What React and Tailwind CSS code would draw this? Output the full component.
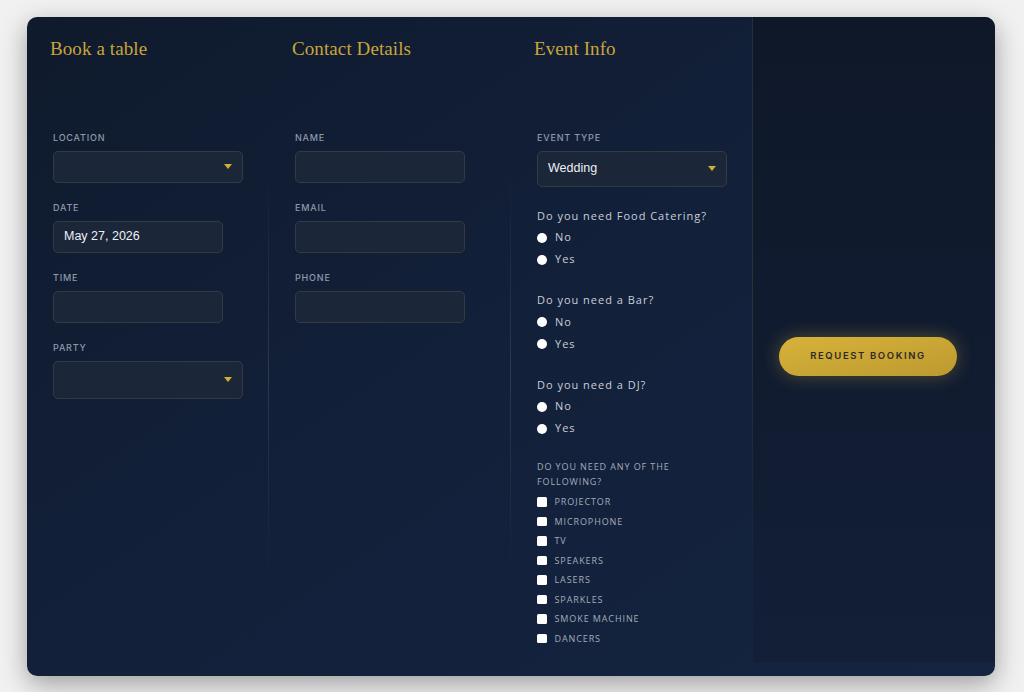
import React from "react";

const serif = { fontFamily: '"Liberation Serif", "DejaVu Serif", serif' };

function Arrow() {
  return (
    <svg width="8" height="5" viewBox="0 0 8 5" className="shrink-0">
      <polygon points="0,0 8,0 4,5" fill="#d4ad35" />
    </svg>
  );
}

function Label({ children }) {
  return (
    <div className="font-['Inter',sans-serif] text-[9px] leading-[12px] font-medium tracking-[0.09em] text-[#8f99ab] uppercase mb-[7px]">
      {children}
    </div>
  );
}

function TextInput({ value }) {
  return (
    <div className="w-[170px] h-[32px] rounded-[5px] border border-[#343a43] bg-[#1b2639] flex items-center px-[10px] font-['Liberation_Sans',Arial,sans-serif] text-[12.5px] text-[#eef1f5]">
      {value}
    </div>
  );
}

function Select({ value, h }) {
  return (
    <div
      className={`w-[190px] ${h} rounded-[5px] border border-[#343a43] bg-[#1b2639] flex items-center justify-between pl-[10px] pr-[10px] font-['Liberation_Sans',Arial,sans-serif] text-[12.5px] text-[#eef1f5]`}
    >
      <span>{value}</span>
      <Arrow />
    </div>
  );
}

function Field({ label, children, last }) {
  return (
    <div className={last ? "" : "mb-[19px]"}>
      <Label>{label}</Label>
      {children}
    </div>
  );
}

function Heading({ children }) {
  return (
    <h2
      style={serif}
      className="text-[19px] leading-[24px] tracking-[0.005em] text-[#c9a53b] -ml-[3px]"
    >
      {children}
    </h2>
  );
}

function Radio({ label }) {
  return (
    <div className="h-[22px] flex items-center gap-[8px]">
      <span className="w-[10px] h-[10px] rounded-full bg-white shrink-0" />
      <span className="font-['Open_Sans',sans-serif] text-[11px] tracking-[0.09em] text-[#c9cfd9]">
        {label}
      </span>
    </div>
  );
}

function Question({ q, first }) {
  return (
    <div className={first ? "mt-[21px]" : "mt-[21.5px]"}>
      <div className="font-['Open_Sans',sans-serif] text-[11px] leading-[16px] tracking-[0.09em] text-[#c9cfd9] mb-[3px]">
        {q}
      </div>
      <Radio label="No" />
      <Radio label="Yes" />
    </div>
  );
}

function Check({ label }) {
  return (
    <div className="h-[19.5px] flex items-center gap-[8px]">
      <span className="w-[9.5px] h-[9.5px] rounded-[1.5px] bg-white shrink-0" />
      <span className="font-['Open_Sans',sans-serif] text-[9px] tracking-[0.1em] text-[#a3abba] uppercase">
        {label}
      </span>
    </div>
  );
}

function Divider() {
  return (
    <div className="w-px shrink-0 mt-[150px] mb-[95px] bg-linear-to-b from-transparent via-[#2e394a] to-transparent" />
  );
}

export default function App() {
  return (
    <div className="w-[1024px] h-[692px] bg-[#f1f1f1] pt-[17px] pl-[27px] overflow-hidden">
      <div className="w-[968px] h-[659px] rounded-[10px] bg-linear-to-br from-[#0f1a2c] via-[#12203a] to-[#15243f] shadow-[0_8px_26px_rgba(0,0,0,0.35)] flex overflow-hidden">
        {/* Column 1 */}
        <div className="w-[241px] shrink-0 pl-[26px] pr-[24px] pt-[20px]">
          <Heading>Book a table</Heading>
          <div className="mt-[70.5px]">
            <Field label="Location">
              <Select value="" h="h-[32px]" />
            </Field>
            <Field label="Date">
              <TextInput value="May 27, 2026" />
            </Field>
            <Field label="Time">
              <TextInput value="" />
            </Field>
            <Field label="Party" last>
              <Select value="" h="h-[38px]" />
            </Field>
          </div>
        </div>
        <Divider />
        {/* Column 2 */}
        <div className="w-[241px] shrink-0 pl-[26px] pr-[24px] pt-[20px]">
          <Heading>Contact Details</Heading>
          <div className="mt-[70.5px]">
            <Field label="Name">
              <TextInput value="" />
            </Field>
            <Field label="Email">
              <TextInput value="" />
            </Field>
            <Field label="Phone" last>
              <TextInput value="" />
            </Field>
          </div>
        </div>
        <Divider />
        {/* Column 3 */}
        <div className="w-[241px] shrink-0 pl-[26px] pr-[25px] pt-[20px]">
          <Heading>Event Info</Heading>
          <div className="mt-[70.5px]">
            <Field label="Event Type" last>
              <Select value="Wedding" h="h-[36px]" />
            </Field>
            <Question q="Do you need Food Catering?" first />
            <Question q="Do you need a Bar?" />
            <Question q="Do you need a DJ?" />
            <div className="mt-[19.5px] font-['Open_Sans',sans-serif] text-[9px] leading-[15px] tracking-[0.1em] text-[#a3abba] uppercase mb-[3px]">
              Do you need any of the following?
            </div>
            {[
              "Projector",
              "Microphone",
              "TV",
              "Speakers",
              "Lasers",
              "Sparkles",
              "Smoke Machine",
              "Dancers",
            ].map((l) => (
              <Check key={l} label={l} />
            ))}
          </div>
        </div>
        {/* Right panel */}
        <div className="w-px shrink-0 mb-[90px] bg-linear-to-b from-[#272d36] via-[#2e3338] to-transparent" />
        <div className="w-[242px] shrink-0 mb-[14px] bg-linear-to-b from-[#0e1829] to-[#131f37] flex flex-col justify-center items-start pl-[26px] pt-[33px]">
          <button className="w-[178px] h-[39px] rounded-full bg-linear-to-br from-[#d7b23a] to-[#bd9a30] shadow-[0_0_18px_rgba(212,175,55,0.35)] font-['Inter',sans-serif] text-[9.5px] font-semibold tracking-[0.17em] text-[#2c2a24] uppercase">
            Request Booking
          </button>
        </div>
      </div>
    </div>
  );
}
